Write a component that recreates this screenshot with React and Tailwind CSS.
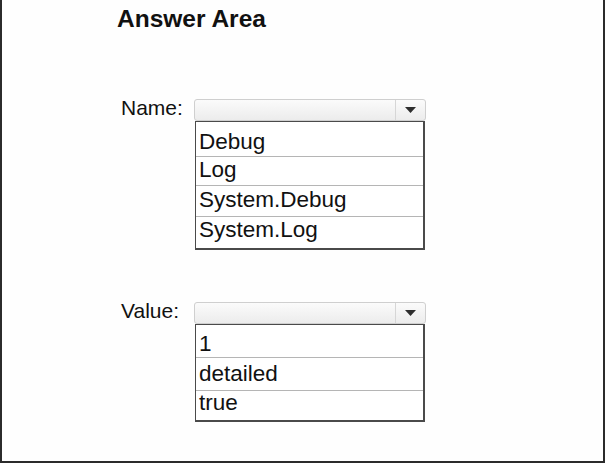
import React from "react";

function Arrow() {
  return (
    <svg width="11" height="6" viewBox="0 0 11 6">
      <polygon points="0,0 11,0 5.5,6" fill="#2e2e2e" />
    </svg>
  );
}

function Select() {
  return (
    <div className="flex h-[22px] w-[232px] rounded-[3px] border border-[#cfcfcf] bg-gradient-to-b from-[#fbfbfb] to-[#ececec]">
      <div className="flex-1 border-r border-[#d6d6d6]" />
      <div className="flex w-[29px] items-center justify-center">
        <Arrow />
      </div>
    </div>
  );
}

function List({ rows }) {
  return (
    <div className="ml-[1px] w-[230px] border-l border-t border-r-2 border-b-2 border-[#4a4a4a] bg-white">
      {rows.map((r, i) => (
        <div
          key={i}
          className={r.cls + (i < rows.length - 1 ? " border-b border-[#b5b5b5]" : "")}
        >
          <div className="pl-[3px] text-[22.5px] leading-[22px]">{r.t}</div>
        </div>
      ))}
    </div>
  );
}

export default function App() {
  return (
    <div
      className="h-[463px] w-[605px] border-b-2 border-l-2 border-r-2 border-[#2b2b2b] bg-[#fefefe] pl-[115px] text-[#111111]"
      style={{ fontFamily: '"Liberation Sans", Arial, sans-serif' }}
    >
      <div className="pt-[7px] text-[24.5px] font-bold leading-[24px]">Answer Area</div>

      <div className="mt-[66px] flex pl-[4px]">
        <div className="w-[73px] text-[21px] leading-[22px]">Name:</div>
        <div className="mt-[2px] flex flex-col">
          <Select />
          <List
            rows={[
              { t: "Debug", cls: "h-[35px] pt-[9px]" },
              { t: "Log", cls: "h-[29px] pt-[2px]" },
              { t: "System.Debug", cls: "h-[31px] pt-[3px]" },
              { t: "System.Log", cls: "h-[31px] pt-[2px]" },
            ]}
          />
        </div>
      </div>

      <div className="mt-[50px] flex pl-[4px]">
        <div className="w-[73px] text-[21px] leading-[22px]">Value:</div>
        <div className="mt-[2px] flex flex-col">
          <Select />
          <List
            rows={[
              { t: "1", cls: "h-[33px] pt-[8px]" },
              { t: "detailed", cls: "h-[33px] pt-[5px]" },
              { t: "true", cls: "h-[29px] pt-[1px]" },
            ]}
          />
        </div>
      </div>
    </div>
  );
}
